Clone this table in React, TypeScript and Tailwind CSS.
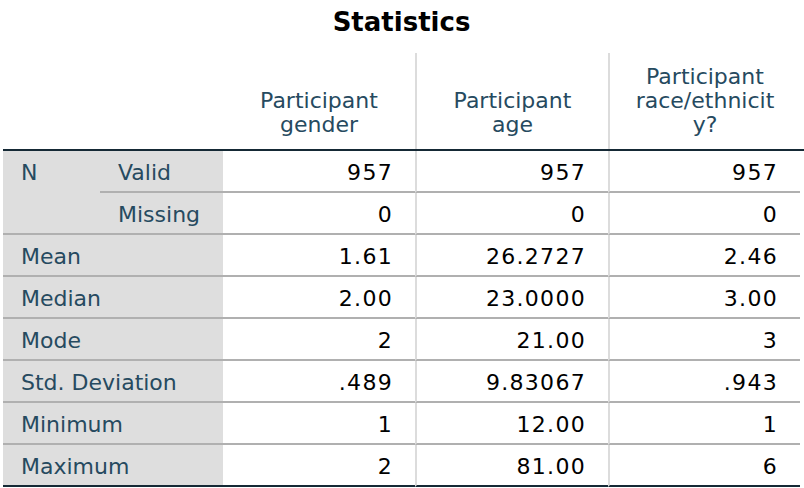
const cols = "grid grid-cols-[97px_123px_192px_193px_192px]";

const rows: { label: string; values: string[] }[] = [
  { label: "Mean", values: ["1.61", "26.2727", "2.46"] },
  { label: "Median", values: ["2.00", "23.0000", "3.00"] },
  { label: "Mode", values: ["2", "21.00", "3"] },
  { label: "Std. Deviation", values: [".489", "9.83067", ".943"] },
  { label: "Minimum", values: ["1", "12.00", "1"] },
  { label: "Maximum", values: ["2", "81.00", "6"] },
];

function ValueCells({ values, last }: { values: string[]; last?: boolean }) {
  const border = last ? "border-[#152935]" : "border-[#b0b0b0]";
  return (
    <>
      {values.map((v, i) => (
        <div
          key={i}
          className={`flex h-[42px] items-center justify-end border-b-2 pt-[3px] pr-[22px] tracking-[1.3px] text-black ${border} ${
            i > 0 ? "border-l-2 border-l-[#dcdcdc]" : ""
          }`}
        >
          {v}
        </div>
      ))}
    </>
  );
}

export default function App() {
  return (
    <div className="h-[488px] w-[804px] overflow-hidden bg-white font-['DejaVu_Sans',sans-serif] text-[22px] leading-[24px]">
      <div className="ml-[3px] h-[53px] w-[797px] pt-[7px] text-center text-[26px] font-bold leading-[30px] text-black">
        Statistics
      </div>

      <div className={`${cols} ml-[3px] h-[98px] border-b-2 border-[#152935] text-[#264a60]`}>
        <div className="col-span-2" />
        <div className="flex items-end justify-center pb-[12px] text-center">
          Participant
          <br />
          gender
        </div>
        <div className="flex items-end justify-center border-l-2 border-[#dcdcdc] pb-[12px] text-center">
          Participant
          <br />
          age
        </div>
        <div className="flex items-end justify-center border-l-2 border-[#dcdcdc] pb-[12px] text-center">
          Participant
          <br />
          race/ethnicit
          <br />
          y?
        </div>
      </div>

      <div className={`${cols} ml-[3px]`}>
        <div className="row-span-2 h-[84px] border-b-2 border-[#b0b0b0] bg-[#dedede] pl-[18px] text-[#264a60]">
          <div className="flex h-[40px] items-center pt-[3px]">N</div>
        </div>
        <div className="flex h-[42px] items-center border-b-2 border-[#b0b0b0] bg-[#dedede] pt-[3px] pl-[18px] text-[#264a60]">
          Valid
        </div>
        <ValueCells values={["957", "957", "957"]} />
        <div className="flex h-[42px] items-center border-b-2 border-[#b0b0b0] bg-[#dedede] pt-[3px] pl-[18px] text-[#264a60]">
          Missing
        </div>
        <ValueCells values={["0", "0", "0"]} />

        {rows.map((r, idx) => {
          const last = idx === rows.length - 1;
          return (
            <div key={r.label} className="contents">
              <div
                className={`col-span-2 flex h-[42px] items-center border-b-2 bg-[#dedede] pt-[3px] pl-[18px] text-[#264a60] ${
                  last ? "border-[#152935]" : "border-[#b0b0b0]"
                }`}
              >
                {r.label}
              </div>
              <ValueCells values={r.values} last={last} />
            </div>
          );
        })}
      </div>
    </div>
  );
}
